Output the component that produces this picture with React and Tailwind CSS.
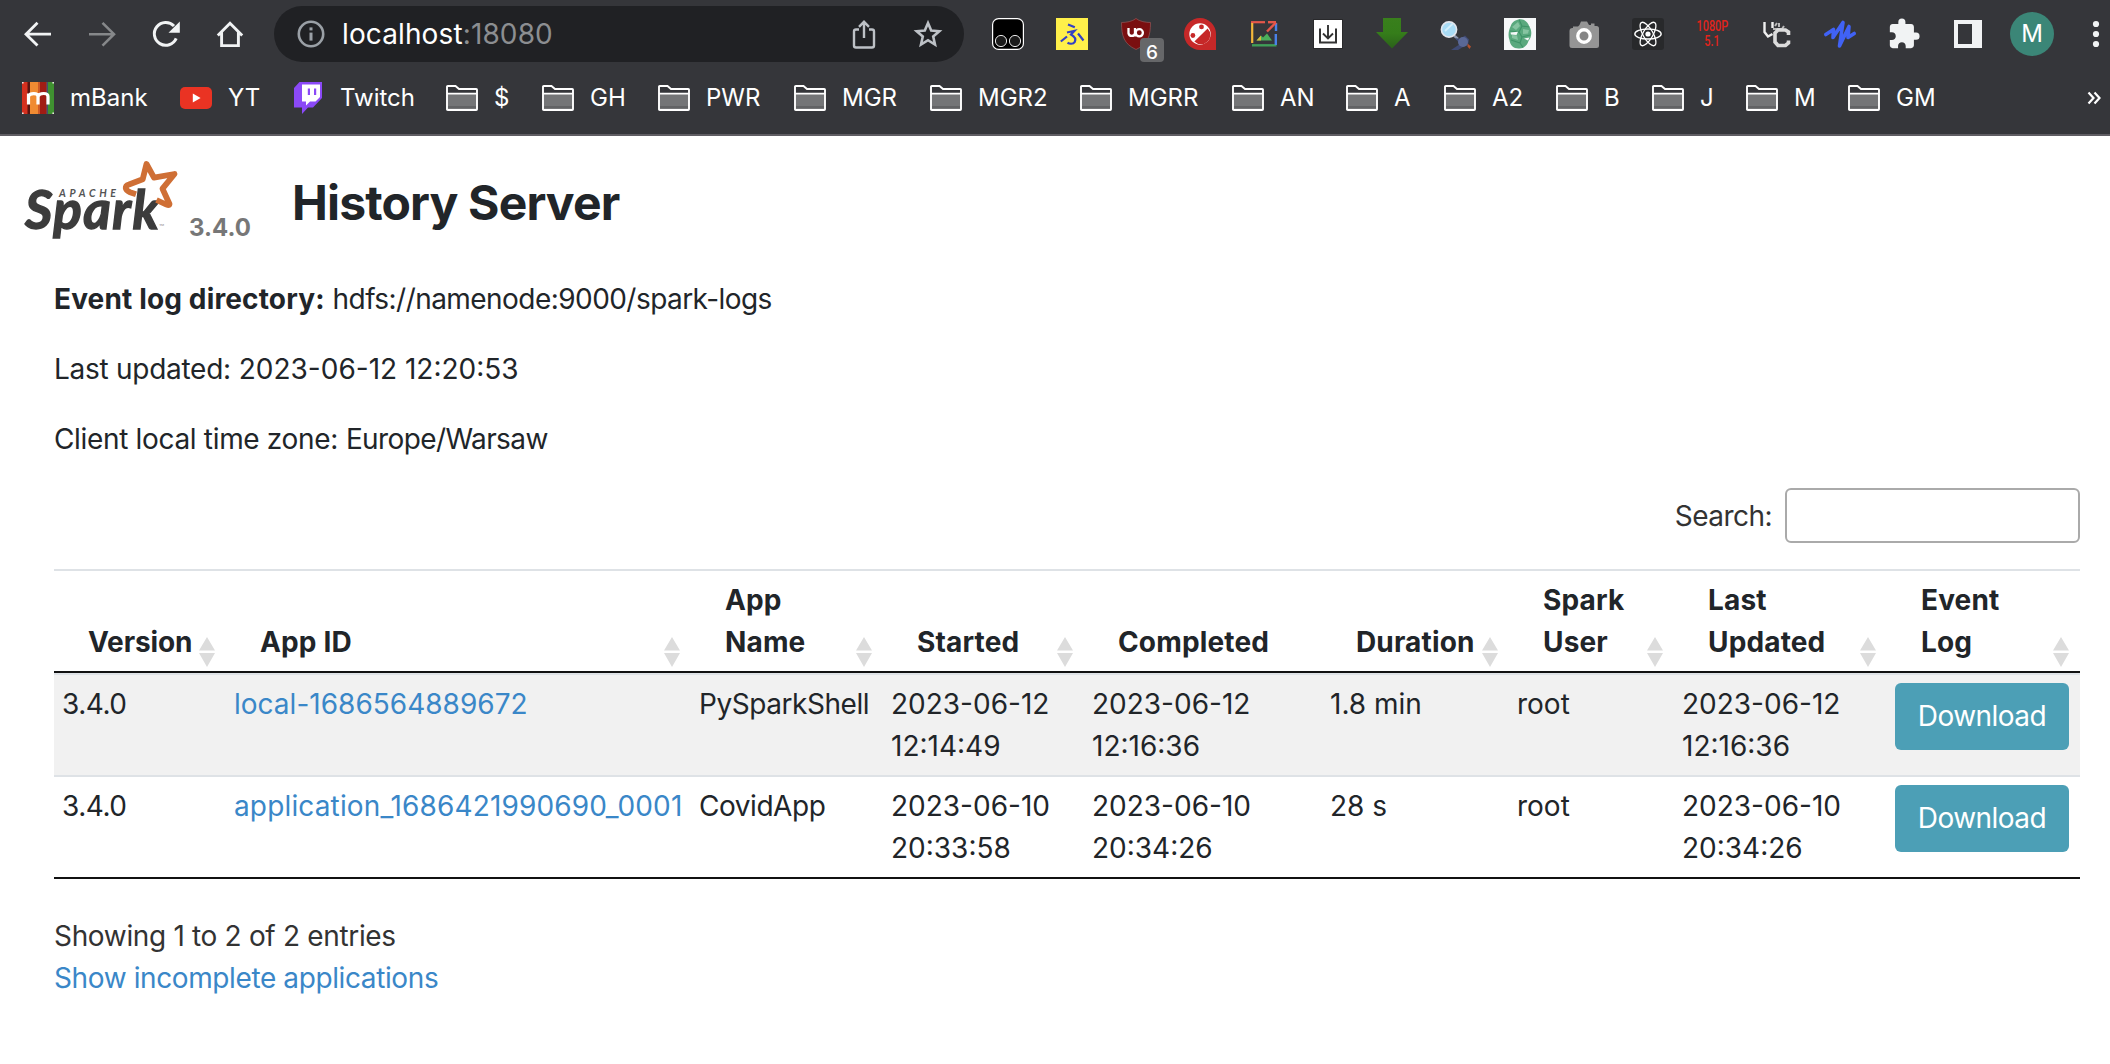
import React from "react";

const Svg = ({ w = 32, h = 32, vb, children, className = "" }) => (
  <svg width={w} height={h} viewBox={vb || `0 0 ${w} ${h}`} fill="none" className={"block shrink-0 overflow-visible " + className}>
    {children}
  </svg>
);

const Back = () => (
  <Svg>
    <path d="M29 16.2H4.500M15.500 4.800L4 16.200L15.500 27.600" stroke="#f1f3f4" strokeWidth="2.800" />
  </Svg>
);
const Forward = () => (
  <Svg>
    <path d="M3 16.2H27.500M16.500 4.800L28 16.200L16.500 27.600" stroke="#86888a" strokeWidth="2.600" />
  </Svg>
);
const Reload = () => (
  <Svg>
    <path d="M26.200 20.400A11.400 11.400 0 1 1 24 8" stroke="#f1f3f4" strokeWidth="3" />
    <path d="M29.800 3.500V14.800H18.500Z" fill="#f1f3f4" />
  </Svg>
);
const Home = () => (
  <Svg>
    <path d="M3.800 17.500L16 5.200L28.200 17.500M7.600 14.500V27.600H24.400V14.500" stroke="#f1f3f4" strokeWidth="2.900" />
  </Svg>
);
const Info = () => (
  <Svg>
    <circle cx="16" cy="16" r="12.200" stroke="#9aa0a6" strokeWidth="2.600" />
    <rect x="14.500" y="9.400" width="3" height="3" fill="#9aa0a6" />
    <rect x="14.500" y="14.600" width="3" height="8" fill="#9aa0a6" />
  </Svg>
);
const Share = () => (
  <Svg>
    <path d="M11 11.500H8A2 2 0 0 0 6 13.500V27.500A2 2 0 0 0 8 29.500H24A2 2 0 0 0 26 27.500V13.500A2 2 0 0 0 24 11.500H21M16 20V4M11 8.800L16 3.800L21 8.800" stroke="#bdc1c6" strokeWidth="2.400" />
  </Svg>
);
const Star = ({ className }) => (
  <Svg className={className}>
    <path d="M16 5L19.200 12.500L27.300 13.200L21.200 18.500L23 26.500L16 22.200L9 26.500L10.800 18.500L4.700 13.200L12.800 12.500Z" stroke="#bdc1c6" strokeWidth="2.600" />
  </Svg>
);

const Monkey = () => (
  <Svg>
    <rect x="0.600" y="0.600" width="30.800" height="30.800" rx="6" fill="#000" stroke="#fff" strokeWidth="1.200" />
    <circle cx="9" cy="23" r="5.600" fill="#1b1b1b" stroke="#e8e8e8" strokeWidth="1" />
    <circle cx="23" cy="23" r="5.600" fill="#1b1b1b" stroke="#e8e8e8" strokeWidth="1" />
  </Svg>
);
const Fu = () => (
  <Svg>
    <rect width="32" height="32" fill="#fff04a" />
    <path d="M12 6.500L18.800 9.200M11 14.500L18.500 12.800L15 16.500C18.500 18.500 20.300 20.800 18.800 23.800C17 26.500 13.500 26 11.500 24.800M4.800 23.500L11 18.500M22 15.500L27.500 22.500" stroke="#3340c4" strokeWidth="2.200" />
  </Svg>
);
const Ublock = () => (
  <div className="relative">
    <Svg>
      <path d="M16 0.500C12.500 3.500 6 4.500 1.500 4.500C1.500 18 4 26 16 31.500C28 26 30.500 18 30.500 4.500C26 4.500 19.500 3.500 16 0.500Z" fill="#7a0f10" stroke="#8d5052" strokeWidth="0.800" />
      <path d="M8.500 10V15.200A3.300 3.300 0 0 0 15 15.200V10M15 14.500V18.500" stroke="#fff" strokeWidth="2.300" />
      <circle cx="19.300" cy="14.800" r="3.600" stroke="#fff" strokeWidth="2.300" />
    </Svg>
    <div className="absolute left-[20px] top-[20px] flex h-6 w-6 items-center justify-center rounded-[4px] bg-[#666769] text-[19px] leading-none font-medium text-white">
      <span className="relative top-[2px]">6</span>
    </div>
  </div>
);
const RedDrop = () => (
  <Svg>
    <path d="M16 0A16 16 0 0 1 32 16V32H16A16 16 0 0 1 16 0Z" fill="#c62828" />
    <circle cx="16" cy="16" r="10.700" fill="#fff" />
    <path d="M23.600 10.400A9 9 0 0 1 10.400 23.600Z" fill="#c62828" />
    <circle cx="8.900" cy="17.500" r="2.400" fill="#c62828" />
    <circle cx="17.500" cy="8.900" r="2.400" fill="#c62828" />
  </Svg>
);
const ImageOut = () => (
  <Svg>
    <path d="M3 4.200H17" stroke="#e5574a" strokeWidth="2.200" />
    <path d="M4.200 5V25" stroke="#f3b73a" strokeWidth="2.200" />
    <path d="M4 27.300H28.500" stroke="#3f9e57" strokeWidth="2.400" />
    <path d="M27.800 16V27" stroke="#4a82e8" strokeWidth="2.400" />
    <path d="M20 4.200H28" stroke="#e5574a" strokeWidth="2.400" />
    <path d="M28 5V13" stroke="#4a82e8" strokeWidth="2.400" />
    <path d="M28 4.500L19 13.500" stroke="#e5574a" strokeWidth="2.400" />
    <path d="M8.500 22.500L13 17.500L15 19.500L19 15.500L24 22.500Z" fill="#4caf5a" />
    <path d="M8.500 22.500L13 17.500L13 22.500Z" fill="#d9b93c" />
  </Svg>
);
const DownloadBox = () => (
  <Svg>
    <rect x="1" y="1" width="30" height="30" fill="#29292b" />
    <rect x="2" y="2" width="28" height="28" fill="#fff" />
    <path d="M8 10.500V24.500H24V10.500" stroke="#333" strokeWidth="2" />
    <path d="M16 7V20M11 15.500L16 20.500L21 15.500" stroke="#333" strokeWidth="1.900" />
  </Svg>
);
const GreenArrow = () => (
  <Svg>
    <defs>
      <linearGradient id="ga" x1="0" y1="0" x2="0" y2="1">
        <stop offset="0" stopColor="#397f1c" />
        <stop offset="0.500" stopColor="#357d1a" />
        <stop offset="1" stopColor="#2b611a" />
      </linearGradient>
    </defs>
    <path d="M7 0H25V14H32L16 30.500L0 14H7Z" fill="url(#ga)" />
  </Svg>
);
const Magnifier = () => (
  <Svg>
    <path d="M14 17.500L18 21" stroke="#8c96ad" strokeWidth="2.500" />
    <circle cx="9" cy="11.500" r="7.600" fill="#a9dcf5" stroke="#e3e7ee" strokeWidth="1.600" />
    <path d="M5 13L12.500 6" stroke="#d4effb" strokeWidth="1.800" />
    <path d="M15 20L20 21L25 17.500L29 21.500L28 27L23 29L18 32H11L17 28L20 26Z" fill="#3f4a73" />
    <circle cx="23" cy="24" r="5" fill="#5a6896" />
    <path d="M27.500 25.500L31 28.500L29.500 31L27.500 28.500Z" fill="#b4512d" />
  </Svg>
);
const Brain = () => (
  <Svg>
    <rect width="32" height="32" fill="#f6f8f9" />
    <path d="M15 1.500C20 0.500 24 4 25.500 9C28.500 13 27.500 20 24.500 23C23 28 19 31 14.500 30.500C9.500 30.500 6 27 5.500 22C3.500 17 5 12 6.500 8.500C8 4 11 2 15 1.500Z" fill="#5aa97e" />
    <path d="M15 1.500L18 8L15 14L6 13M18 8L25.500 9M15 14L18 19L26 17M18 19L16 25L7 22M16 25L19 29.500" stroke="#3f9468" strokeWidth="1.200" />
    <path d="M8 9L14 4L16 8L12 12ZM8 17L13 17.500L14 22L8 20ZM19 11L25 12L24 15.500L19 16Z" fill="#86c4a1" />
    <path d="M6.500 14.500L14 13.800L12.500 17L7 16.500ZM20 20.500L25.500 19.500L24 22.500Z" fill="#f6f8f9" />
  </Svg>
);
const Camera = () => (
  <Svg>
    <path d="M11.500 7L13 3.500H19L21 7H23V5.500H26.500V8H28.500A2.500 2.500 0 0 1 31 10.500V27.500A2.500 2.500 0 0 1 28.500 30H4A2.500 2.500 0 0 1 1.500 27.500V13A3 3 0 0 1 4.500 10H5V8.500H10Z" fill="#959595" />
    <circle cx="16" cy="18" r="6.200" fill="#858585" stroke="#fff" strokeWidth="3.400" />
  </Svg>
);
const ReactIcon = () => (
  <Svg>
    <rect width="32" height="32" rx="3" fill="#28292b" />
    <g stroke="#fff" strokeWidth="1.300">
      <ellipse cx="16" cy="16" rx="13.200" ry="5" />
      <ellipse cx="16" cy="16" rx="13.200" ry="5" transform="rotate(60 16 16)" />
      <ellipse cx="16" cy="16" rx="13.200" ry="5" transform="rotate(120 16 16)" />
    </g>
    <circle cx="16" cy="16" r="2.600" fill="#fff" />
  </Svg>
);
const P1080 = () => (
  <div className="flex h-8 w-8 flex-col items-center justify-center font-['Roboto',sans-serif] text-[14px] leading-[15px] font-medium text-[#e2231a]">
    <span className="origin-center scale-x-[0.780]">1080P</span>
    <span className="origin-center scale-x-[0.780]">5.1</span>
  </div>
);
const Uc = () => (
  <Svg>
    <path d="M4.500 4V14L8 18.500L12.500 16M12.500 4V10" stroke="#efefef" strokeWidth="2.400" />
    <path d="M15 8L17 5M19 9V5M13 11H22L24 8" stroke="#b9b9b9" strokeWidth="2" />
    <path d="M28.500 17V14L25.500 12H18L15 15V24L18 27.500H25.500L28.500 25V22.500" stroke="#dcdcdc" strokeWidth="3.600" />
  </Svg>
);
const Wave = () => (
  <Svg>
    <path d="M1.800 16.500L9.500 11.500L9 19.500L19 4.500L15.500 28L25 8.500L24 19.500L30.200 15.500" stroke="#4062f5" strokeWidth="3.600" strokeLinejoin="round" strokeLinecap="round" />
  </Svg>
);
const Puzzle = () => (
  <Svg w={34} h={34} vb="0 0 24 24">
    <path fill="#f1f3f4" d="M20.500 11H19V7c0-1.100-.9-2-2-2h-4V3.500a2.500 2.500 0 0 0-5 0V5H4c-1.100 0-1.990.9-1.990 2v3.800H3.500c1.490 0 2.700 1.210 2.700 2.700s-1.210 2.700-2.700 2.700H2V20c0 1.100.9 2 2 2h3.800v-1.500c0-1.490 1.210-2.700 2.700-2.700s2.700 1.210 2.700 2.700V22H17c1.100 0 2-.9 2-2v-4h1.500a2.500 2.500 0 0 0 0-5z" />
  </Svg>
);
const SidePanel = () => (
  <Svg>
    <path fillRule="evenodd" d="M2 2H30V30H2ZM6 6V26H20V6Z" fill="#f1f3f4" />
  </Svg>
);
const Avatar = () => (
  <div className="flex h-11 w-11 shrink-0 items-center justify-center rounded-full bg-[#3b8677] text-[24px] leading-none text-white">M</div>
);
const Dots = () => (
  <Svg>
    <circle cx="16" cy="6" r="3.100" fill="#f1f3f4" />
    <circle cx="16" cy="16" r="3.100" fill="#f1f3f4" />
    <circle cx="16" cy="26" r="3.100" fill="#f1f3f4" />
  </Svg>
);

const MBank = () => (
  <Svg>
    <rect width="32" height="32" fill="#d5301f" />
    <rect x="5.500" width="2.500" height="32" fill="#5a1512" />
    <rect x="8" width="8" height="32" fill="#f08b32" />
    <rect x="16" width="2" height="32" fill="#cf5a26" />
    <rect x="18" width="6.500" height="32" fill="#a01c14" />
    <rect x="24.500" width="1.500" height="32" fill="#41506e" />
    <rect x="26" width="6" height="32" fill="#3f9130" />
    <path d="M0 0h1.600v1.600H0zM30.400 0H32v1.600h-1.600zM0 30.400h1.600V32H0zM30.400 30.400H32V32h-1.600z" fill="#e9e4e0" />
    <path d="M6.500 22.500V11.500M6.500 14C8 10.800 16 10.500 16 14.500V22.500M16 14.500C17.500 10.500 26 10.500 26 14.500V22.500" stroke="#fff" strokeWidth="3.200" />
  </Svg>
);
const YouTube = () => (
  <Svg>
    <rect y="5" width="32" height="22" rx="5" fill="#ea3323" />
    <path d="M12.800 11.500L20.600 16L12.800 20.500Z" fill="#fff" />
  </Svg>
);
const Twitch = () => (
  <Svg>
    <path d="M7.500 0H30V16L21 25.500H16L10 32V25.500H2V6Z" fill="#8b49f7" />
    <path d="M10 2.500H28V15L23.500 19.500H18L14 23.500V19.500H10Z" fill="#fff" />
    <path d="M15.800 6.500H18V13H15.800ZM22 6.500H24.200V13H22Z" fill="#8b49f7" />
  </Svg>
);
const Folder = () => (
  <Svg>
    <rect x="1" y="11" width="30" height="16" fill="#747577" />
    <rect x="1" y="24" width="30" height="2" fill="#626365" />
    <path d="M1 26.500V4.800Q1 4 1.800 4H9.500L13 7H30.200Q31 7 31 7.800V27.200Q31 28 30.200 28H1.800Q1 28 1 27.200ZM1 11.600H31" stroke="#fff" strokeWidth="1.900" />
  </Svg>
);

const extensions = [Monkey, Fu, Ublock, RedDrop, ImageOut, DownloadBox, GreenArrow, Magnifier, Brain, Camera, ReactIcon, P1080, Uc, Wave, Puzzle, SidePanel, Avatar, Dots];

const bookmarks = [
  ["mBank", "w-[158px]", MBank],
  ["YT", "w-[112px]", YouTube],
  ["Twitch", "w-[154px]", Twitch],
  ["$", "w-[96px]", Folder],
  ["GH", "w-[116px]", Folder],
  ["PWR", "w-[136px]", Folder],
  ["MGR", "w-[136px]", Folder],
  ["MGR2", "w-[150px]", Folder],
  ["MGRR", "w-[152px]", Folder],
  ["AN", "w-[114px]", Folder],
  ["A", "w-[98px]", Folder],
  ["A2", "w-[112px]", Folder],
  ["B", "w-[96px]", Folder],
  ["J", "w-[94px]", Folder],
  ["M", "w-[102px]", Folder],
  ["GM", "w-[100px]", Folder],
];

function BrowserChrome() {
  return (
    <header className="h-[136px] overflow-hidden border-b-2 border-[#5f5d63] bg-[#35363a] text-white">
      <div className="flex h-[68px] items-center">
        <div className="flex w-[274px] shrink-0 items-center gap-8 pl-[22px]">
          <Back />
          <Forward />
          <Reload />
          <Home />
        </div>
        <div className="flex h-14 w-[690px] shrink-0 items-center rounded-full bg-[#202124] pl-[21px] pr-5">
          <Info />
          <div className="ml-[15px] flex-1 text-[28px] leading-none tracking-[0.120px]">
            localhost<span className="text-[#8c8e91]">:18080</span>
          </div>
          <Share />
          <Star className="ml-8" />
        </div>
        <div className="ml-3 flex">
          {extensions.map((Icon, i) => (
            <div key={i} className="flex h-11 w-16 shrink-0 items-center justify-center">
              <Icon />
            </div>
          ))}
        </div>
      </div>
      <nav className="flex h-[60px] items-center pl-[22px] text-[24px] leading-none">
        {bookmarks.map(([label, width, Icon]) => (
          <a key={label} className={"flex shrink-0 items-center gap-4 whitespace-nowrap " + width}>
            <Icon />
            <span>{label}</span>
          </a>
        ))}
        <Svg w={14} h={16} className="ml-[139px]">
          <path d="M1.500 2.500L6.500 8L1.500 13.500M7.500 2.500L12.500 8L7.500 13.500" stroke="#fff" strokeWidth="2.200" />
        </Svg>
      </nav>
    </header>
  );
}

const SparkLogo = () => (
  <Svg w={156} h={80}>
    <text x="35" y="37" fontFamily="Lato" fontStyle="italic" fontWeight="700" fontSize="10.500" fill="#555" textLength="57">APACHE</text>
    <text x="1" y="69" fontFamily="Lato" fontStyle="italic" fontWeight="700" fontSize="53" fill="#3c3c3c" stroke="#3c3c3c" strokeWidth="1.400" textLength="134">Spark</text>
    <text x="135" y="69" fontFamily="Lato" fontSize="7" fill="#999">™</text>
    <path d="M112 34.300L106 32.200C100.500 30 100.500 26 105 24.500L118.700 19.300L122.500 4L130 17.700L150.500 14L138.500 28.700L145.500 44Q145 46 141 44L132.500 40" stroke="#cf6f35" strokeWidth="5.800" strokeLinejoin="round" />
  </Svg>
);

const SortIcon = () => (
  <Svg w={16} h={30} className="mr-[11px] mb-[-4px]">
    <path d="M8 0L16 13.500H0ZM0 16H16L8 30Z" fill="#dcdcdc" />
  </Svg>
);

const columns = [
  ["Version", "w-[172px]", true],
  ["App ID", "w-[465px]", true],
  ["App Name", "w-[192px]", true],
  ["Started", "w-[201px]", true],
  ["Completed", "w-[238px]", false],
  ["Duration", "w-[187px]", true],
  ["Spark User", "w-[165px]", true],
  ["Last Updated", "w-[213px]", true],
  ["Event Log", "w-[193px]", true],
];

const rows = [
  ["3.4.0", "local-1686564889672", "PySparkShell", "2023-06-12 12:14:49", "2023-06-12 12:16:36", "1.8 min", "root", "2023-06-12 12:16:36"],
  ["3.4.0", "application_1686421990690_0001", "CovidApp", "2023-06-10 20:33:58", "2023-06-10 20:34:26", "28 s", "root", "2023-06-10 20:34:26"],
];

const cellTracking = [
  "tracking-[-0.500px]",
  "",
  "tracking-[-0.450px]",
  "",
  "",
  "",
  "",
  "",
];

const split = (t) => t.split(" ").map((p, i) => <div key={i}>{p}</div>);

function HistoryTable() {
  return (
    <table className="w-[2026px] table-fixed border-separate border-spacing-0 border-b-2 border-[#111]">
      <colgroup>
        {columns.map(([label, width]) => (
          <col key={label} className={width} />
        ))}
      </colgroup>
      <thead>
        <tr>
          {columns.map(([label, , sortable]) => (
            <th key={label} className="border-t-2 border-b-2 border-t-[#dee2e6] border-b-[#111] p-0 text-left align-bottom font-bold">
              <div className={"flex h-[100px] items-end justify-between pb-2 pl-[34px] whitespace-nowrap " + (label === "Version" ? "tracking-[-0.100px]" : "tracking-[0.150px]")}>
                <div>{["App Name", "Spark User", "Last Updated", "Event Log"].includes(label) ? split(label) : label}</div>
                {sortable && <SortIcon />}
              </div>
            </th>
          ))}
        </tr>
      </thead>
      <tbody>
        {rows.map((row) => (
          <tr key={row[1]} className="bg-white odd:bg-[#f1f1f1]">
            {row.map((cell, i) => (
              <td key={i} className={"border-t-2 border-[#dee2e6] px-2 py-2 align-top whitespace-nowrap " + cellTracking[i]}>
                {i === 1 ? <a className={"text-[#3a87c8] " + (cell.startsWith("app") ? "tracking-[0.150px]" : "tracking-[0.010px]")}>{cell}</a> : [3, 4, 7].includes(i) ? split(cell) : cell}
              </td>
            ))}
            <td className="border-t-2 border-[#dee2e6] px-2 py-2 align-top">
              <a className="flex h-[67px] w-[174px] items-center justify-center rounded-[6px] bg-[#4c9fb6] pb-px tracking-[-0.550px] text-white">Download</a>
            </td>
          </tr>
        ))}
      </tbody>
    </table>
  );
}

export default function App() {
  return (
    <div className="h-[1064px] w-[2110px] overflow-hidden bg-white font-['Inter',sans-serif] text-[28px] leading-[42px] text-[#212529]">
      <BrowserChrome />
      <div className="flex h-[128px] items-start pt-[24px] pl-[24px]">
        <SparkLogo />
        <span className="mt-[47px] ml-[9px] w-[103px] text-[24px] font-bold text-[#777]">3.4.0</span>
        <h1 className="mt-[14px] text-[48px] leading-[58px] font-bold tracking-[-0.850px]">History Server</h1>
      </div>
      <main className="pl-[54px]">
        <div className="flex flex-col gap-7 pt-[14px]">
          <p><strong className="font-bold tracking-[0.150px]">Event log directory:</strong> <span className="tracking-[-0.550px]">hdfs://namenode:9000/spark-logs</span></p>
          <p><span className="tracking-[-0.270px]">Last updated:</span> 2023-06-12 12:20:53</p>
          <p><span className="tracking-[-0.330px]">Client local time zone:</span> <span className="tracking-[-0.600px]">Europe/Warsaw</span></p>
        </div>
        <div className="mt-[28px] mb-[26px] flex h-[55px] w-[2026px] items-center justify-end gap-[13px] text-[#333]">
          <label className="tracking-[-0.550px]">Search:</label>
          <input className="h-[55px] w-[295px] rounded-[6px] border-2 border-[#aaa] bg-white" />
        </div>
        <HistoryTable />
        <p className="mt-[36px] tracking-[-0.330px] text-[#333]">Showing 1 to 2 of 2 entries</p>
        <a className="block tracking-[-0.390px] text-[#3a87c8]">Show incomplete applications</a>
      </main>
    </div>
  );
}
